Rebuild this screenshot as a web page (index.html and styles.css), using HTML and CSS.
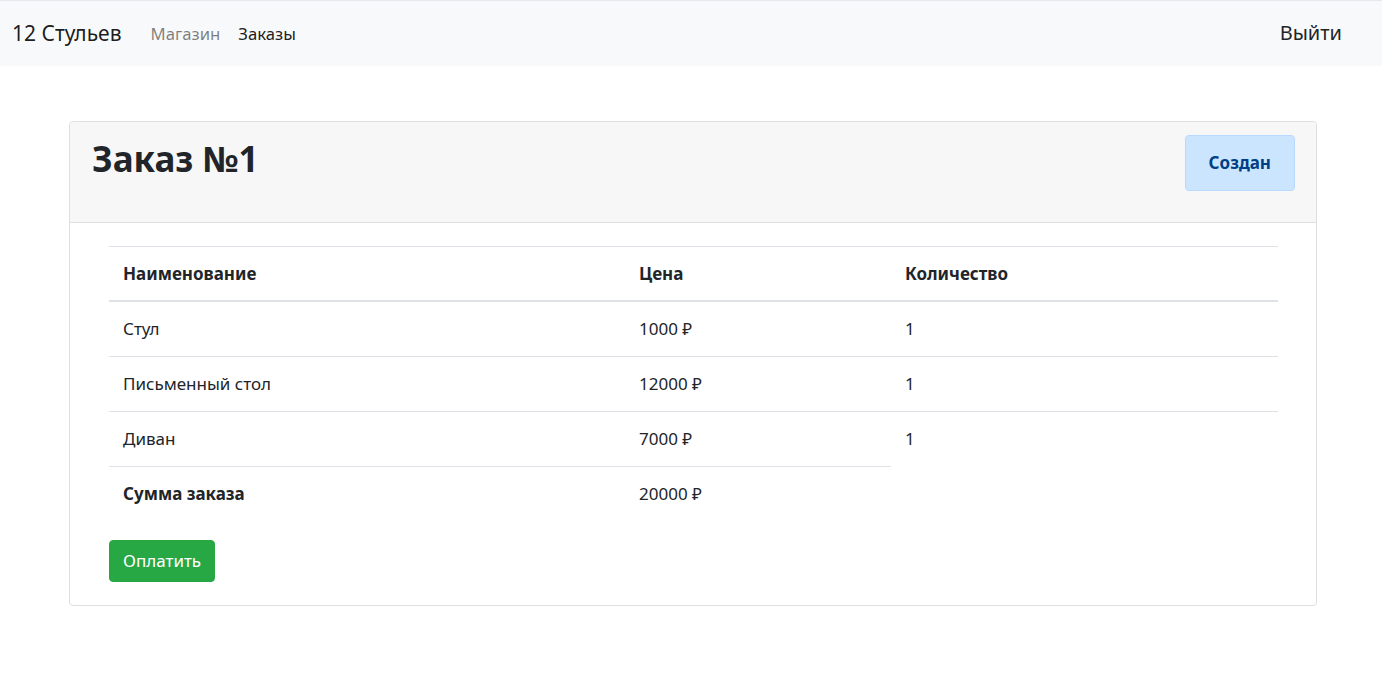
FILE: index.html
```html
<!DOCTYPE html>
<html lang="ru">
<head>
<meta charset="utf-8">
<title>Заказ №1</title>
<link rel="stylesheet" href="styles.css">
</head>
<body>
<nav class="navbar">
  <div class="nav-left">
    <a class="brand" href="#">12 Стульев</a>
    <a class="nav-link muted" href="#">Магазин</a>
    <a class="nav-link active" href="#">Заказы</a>
  </div>
  <a class="logout" href="#">Выйти</a>
</nav>
<main class="page">
  <section class="card">
    <header class="card-header">
      <h1 class="title">Заказ №1</h1>
      <div class="status">Создан</div>
    </header>
    <div class="card-body">
      <table class="table">
        <thead>
          <tr><th class="c1">Наименование</th><th class="c2">Цена</th><th class="c3">Количество</th></tr>
        </thead>
        <tbody>
          <tr><td>Стул</td><td>1000 ₽</td><td>1</td></tr>
          <tr><td>Письменный стол</td><td>12000 ₽</td><td>1</td></tr>
          <tr><td>Диван</td><td>7000 ₽</td><td>1</td></tr>
          <tr class="total"><td class="bold">Сумма заказа</td><td>20000 ₽</td></tr>
        </tbody>
      </table>
      <button class="btn-pay" type="button">Оплатить</button>
    </div>
  </section>
</main>
</body>
</html>
```
FILE: styles.css
```css
* { box-sizing: border-box; }
html, body { margin: 0; padding: 0; }
body {
  font-family: "Noto Sans", "Open Sans", sans-serif;
  font-size: 17px;
  line-height: 24px;
  color: #212529;
  background: #fff;
}
a { text-decoration: none; }

.navbar {
  height: 66px;
  background: #f8f9fa;
  border-top: 1px solid #e6e8eb;
  display: flex;
  align-items: center;
  justify-content: space-between;
  padding: 0 40px 0 12px;
}
.nav-left { display: flex; align-items: center; }
.brand {
  font-size: 21px;
  color: rgba(0,0,0,.9);
  margin-right: 20px;
  padding-bottom: 2px;
}
.nav-link { padding: 0 9px; font-size: 16.7px; }
.nav-link.muted { color: rgba(0,0,0,.5); }
.nav-link.active { color: rgba(0,0,0,.9); }
.logout { font-size: 20px; color: #212529; padding-bottom: 2px; }

.page { padding: 55px 65px 0 69px; }
.card {
  border: 1px solid #dfdfdf;
  border-radius: 4px;
  background: #fff;
}
.card-header {
  background: #f7f7f7;
  border-bottom: 1px solid #dfdfdf;
  border-radius: 4px 4px 0 0;
  display: flex;
  justify-content: space-between;
  align-items: flex-start;
  padding: 13px 21px 31px 22px;
}
.title {
  margin: 0;
  font-size: 35px;
  line-height: 48px;
  font-weight: 700;
  color: #212529;
}
.status {
  background: #cce5ff;
  border: 1px solid #b8daff;
  color: #004085;
  border-radius: 4px;
  font-weight: 700;
  padding: 15px 23px;
  line-height: 24px;
}

.card-body { padding: 23px 38px 23px 39px; }
.table {
  width: 100%;
  border-collapse: collapse;
  margin-bottom: 20px;
}
.table th, .table td {
  text-align: left;
  padding: 15px 14px;
  line-height: 24px;
  border-top: 1px solid #dee2e6;
  vertical-align: top;
}
.table th { font-weight: 700; border-bottom: 2px solid #dee2e6; padding-bottom: 14px; }
.table .c1 { width: 516px; }
.table .c2 { width: 266px; }
.table .total td { padding-bottom: 14px; }
.bold { font-weight: 700; }

.btn-pay {
  font-family: inherit;
  font-size: 17px;
  line-height: 25px;
  color: #fff;
  background: #28a745;
  border: 1px solid #28a745;
  border-radius: 4px;
  padding: 7px 13px 8px;
  cursor: pointer;
  display: block;
}
```
